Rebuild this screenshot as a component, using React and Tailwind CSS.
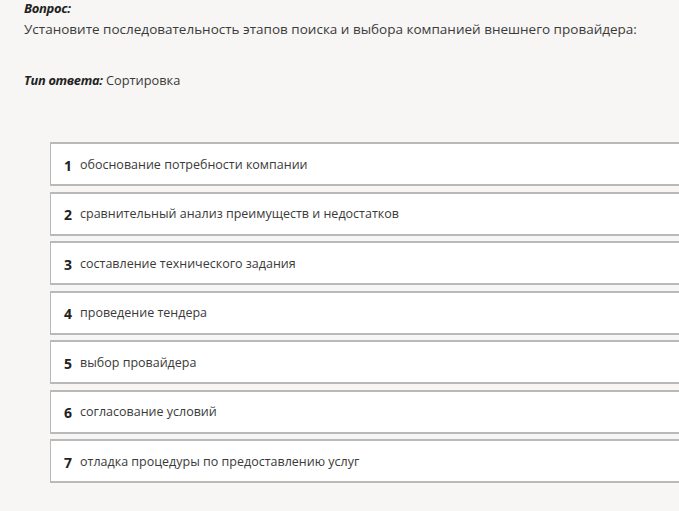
import React from 'react';

const steps = [
  'обоснование потребности компании',
  'сравнительный анализ преимуществ и недостатков',
  'составление технического задания',
  'проведение тендера',
  'выбор провайдера',
  'согласование условий',
  'отладка процедуры по предоставлению услуг',
];

const App = () => {
  return (
    <div className="w-[679px] h-[511px] overflow-hidden bg-[#f7f6f5] text-[#3a3a3a] font-['Open_Sans',sans-serif]">
      <div className="pl-[24px] pt-[1px]">
        <div className="text-[13px] leading-[15px] font-bold italic text-[#222] tracking-[-0.3px]">Вопрос:</div>
        <p className="mt-[4px] text-[13.5px] leading-[18px]">
          Установите последовательность этапов поиска и выбора компанией внешнего провайдера:
        </p>
        <p className="mt-[33px] text-[12.8px] leading-[18px]">
          <span className="font-bold italic text-[#222] tracking-[-0.3px]">Тип ответа:</span> Сортировка
        </p>
      </div>

      <ul className="mt-[53px] ml-[50px] w-[660px] flex flex-col gap-[5.5px]">
        {steps.map((text, i) => (
          <li
            key={i}
            className="h-[44px] flex items-center bg-white border border-[#b9b9b9] border-t-2 border-b-2 pl-[13px] pt-[2px]"
          >
            <span className="w-[16px] text-[14px] font-bold text-[#222]">{i + 1}</span>
            <span className="text-[12.5px] text-[#3a3a3a]">{text}</span>
          </li>
        ))}
      </ul>
    </div>
  );
};

export default App;
